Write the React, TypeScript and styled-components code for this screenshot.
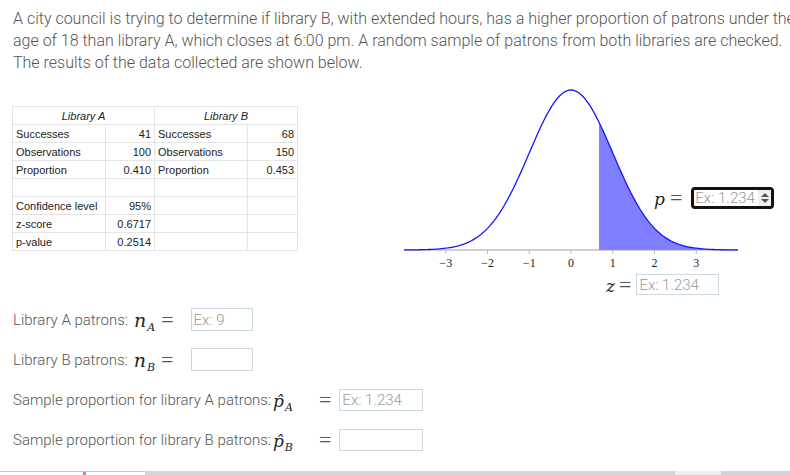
import React from "react";
import styled, { createGlobalStyle } from "styled-components";

const GlobalStyle = createGlobalStyle`
  html, body {
    margin: 0;
    padding: 0;
    overflow: hidden;
    background: #fff;
  }
  body {
    font-family: Roboto, "Liberation Sans", sans-serif;
  }
`;

const Page = styled.div`
  width: 790px;
  height: 475px;
  display: flex;
  flex-direction: column;
  position: relative;
  overflow: hidden;
`;

const Intro = styled.p`
  margin: 8px 0 0 13px;
  font-size: 16px;
  line-height: 22px;
  font-weight: 300;
  color: #555;
  white-space: nowrap;
`;

const Upper = styled.div`
  display: flex;
  margin-top: 6px;
`;

const DataTable = styled.table`
  margin: 26px 0 0 12px;
  border-collapse: collapse;
  font-family: "Liberation Sans", Arial, sans-serif;
  font-size: 11px;
  color: #222;
  table-layout: fixed;
  width: 285px;
  height: 143px;
  align-self: flex-start;
`;

const Cell = styled.td<{ $align?: "left" | "right" | "center"; $italic?: boolean }>`
  border: 1px solid #e4e4e4;
  height: 17px;
  padding: 0 3px;
  text-align: ${(p) => p.$align || "left"};
  font-style: ${(p) => (p.$italic ? "italic" : "normal")};
  white-space: nowrap;
  overflow: hidden;
`;

const ChartColumn = styled.div`
  margin-left: 98px;
  width: 395px;
  display: flex;
  flex-direction: column;
  position: relative;
`;

const Chart = styled.svg`
  display: block;
`;

const MathLabel = styled.span<{ $ml?: number; $size?: number }>`
  display: inline-flex;
  align-items: baseline;
  margin-left: ${(p) => p.$ml ?? 0}px;
  font-family: "DejaVu Serif", "Liberation Serif", serif;
  font-size: ${(p) => p.$size ?? 17}px;
  color: #222;
  white-space: nowrap;
`;

const Var = styled.i`
  font-style: italic;
`;

const Sub = styled.span`
  font-size: 11px;
  font-style: italic;
  position: relative;
  top: 4px;
  margin-left: 1px;
`;

const Eq = styled.span<{ $l: number; $r: number }>`
  font-family: "Liberation Serif", serif;
  font-size: 22px;
  line-height: 1;
  margin: 0 ${(p) => p.$r}px 0 ${(p) => p.$l}px;
  color: #555;
`;

const POverlay = styled.div`
  position: absolute;
  left: 258px;
  top: 107px;
  display: flex;
  align-items: center;
`;

const FocusBox = styled.div`
  width: 76px;
  height: 16px;
  border: 3px solid #111;
  border-radius: 4px;
  display: flex;
  align-items: center;
  justify-content: space-between;
  padding-left: 1px;
  font-size: 15px;
  font-weight: 300;
  color: #999;
  overflow: hidden;
`;

const Spinner = styled.div`
  width: 13px;
  height: 16px;
  background: #f0f0f0;
  display: flex;
  flex-direction: column;
  align-items: center;
  justify-content: center;
  gap: 2px;
`;

const Tri = styled.div<{ $up?: boolean }>`
  width: 0;
  height: 0;
  border-left: 4px solid transparent;
  border-right: 4px solid transparent;
  ${(p) => (p.$up ? "border-bottom: 4px solid #555;" : "border-top: 4px solid #555;")}
`;

const ZRow = styled.div`
  display: flex;
  align-items: center;
  padding-left: 210px;
  margin-top: 2px;
  height: 21px;
`;

const Input = styled.input<{ $w: number; $h: number }>`
  box-sizing: border-box;
  width: ${(p) => p.$w}px;
  height: ${(p) => p.$h}px;
  border: 1px solid #cbd8df;
  border-radius: 0;
  padding: 0 2px;
  font-family: Roboto, "Liberation Sans", sans-serif;
  font-size: 15px;
  font-weight: 300;
  color: #333;
  outline: none;
  &::placeholder {
    color: #9a9a9a;
  }
`;

const Questions = styled.div`
  display: flex;
  flex-direction: column;
  gap: 17px;
  margin: 13px 0 0 13px;
`;

const QRow = styled.div`
  display: flex;
  align-items: center;
  height: 23px;
  font-size: 15px;
  font-weight: 300;
  color: #555;
`;

const Scrollbar = styled.div`
  margin-top: auto;
  display: flex;
  height: 4px;
`;

const Seg = styled.div<{ $w: number; $c: string; $top?: boolean }>`
  width: ${(p) => p.$w}px;
  flex: ${(p) => (p.$w ? "none" : "1")};
  background: ${(p) => p.$c};
  border-top: ${(p) => (p.$top ? "1px solid #c8c8c8" : "none")};
  position: relative;
`;

const Marker = styled.span`
  position: absolute;
  left: 83px;
  top: 0;
  width: 3px;
  height: 3px;
  background: #e070e0;
`;

const rows: [string, string, string, string][] = [
  ["Successes", "41", "Successes", "68"],
  ["Observations", "100", "Observations", "150"],
  ["Proportion", "0.410", "Proportion", "0.453"],
  ["", "", "", ""],
  ["Confidence level", "95%", "", ""],
  ["z-score", "0.6717", "", ""],
  ["p-value", "0.2514", "", ""],
];

// normal curve geometry (svg coords)
const CX = 175;
const UNIT = 41.75;
const AXIS = 170;
const HSCALE = 401;
const zStat = 0.6717;

const pdf = (z: number) => Math.exp((-z * z) / 2) / Math.sqrt(2 * Math.PI);
const px = (z: number) => CX + z * UNIT;
const py = (z: number) => AXIS - pdf(z) * HSCALE;

function curvePath(from: number, to: number) {
  const pts: string[] = [];
  const steps = 160;
  for (let i = 0; i <= steps; i++) {
    const z = from + ((to - from) * i) / steps;
    pts.push(`${px(z).toFixed(2)},${py(z).toFixed(2)}`);
  }
  return pts;
}

function NormalChart() {
  const line = curvePath(-4, 4);
  const shade = curvePath(zStat, 4);
  const ticks = [-3, -2, -1, 0, 1, 2, 3];
  return (
    <Chart width={395} height={192} viewBox="0 0 395 192">
      <line x1={px(-4)} y1={AXIS} x2={px(4)} y2={AXIS} stroke="#cfcfcf" strokeWidth={2} />
      {ticks.map((t) => (
        <g key={t}>
          <line x1={px(t)} y1={AXIS} x2={px(t)} y2={AXIS + 4} stroke="#bbb" strokeWidth={1} />
          <text
            x={px(t)}
            y={AXIS + 17}
            textAnchor="middle"
            fontFamily="'Liberation Serif', serif"
            fontSize={12}
            fill="#222"
          >
            {t < 0 ? `\u2212${-t}` : t}
          </text>
        </g>
      ))}
      <path
        d={`M${px(zStat)},${AXIS} L${shade.join(" L")} L${px(4)},${AXIS} Z`}
        fill="#7f7fff"
      />
      <path d={`M${line.join(" L")}`} fill="none" stroke="#1414ff" strokeWidth={1.3} />
    </Chart>
  );
}

export default function App() {
  return (
    <Page>
      <GlobalStyle />
      <Intro>
        A city council is trying to determine if library B, with extended hours, has a higher proportion of patrons under the
        <br />
        age of 18 than library A, which closes at 6:00 pm. A random sample of patrons from both libraries are checked.
        <br />
        The results of the data collected are shown below.
      </Intro>
      <Upper>
        <DataTable>
          <colgroup>
            <col style={{ width: 93 }} />
            <col style={{ width: 49 }} />
            <col style={{ width: 93 }} />
            <col style={{ width: 50 }} />
          </colgroup>
          <tbody>
            <tr>
              <Cell colSpan={2} $align="center" $italic>
                Library A
              </Cell>
              <Cell colSpan={2} $align="center" $italic>
                Library B
              </Cell>
            </tr>
            {rows.map((r, i) => (
              <tr key={i}>
                <Cell>{r[0]}</Cell>
                <Cell $align="right">{r[1]}</Cell>
                <Cell>{r[2]}</Cell>
                <Cell $align="right">{r[3]}</Cell>
              </tr>
            ))}
          </tbody>
        </DataTable>
        <ChartColumn>
          <NormalChart />
          <POverlay>
            <MathLabel $ml={0}>
              <Var>p</Var>
              <Eq $l={5} $r={9}>=</Eq>
            </MathLabel>
            <FocusBox>
              Ex: 1.234
              <Spinner>
                <Tri $up />
                <Tri />
              </Spinner>
            </FocusBox>
          </POverlay>
          <ZRow>
            <MathLabel>
              <Var>z</Var>
              <Eq $l={4} $r={5}>=</Eq>
            </MathLabel>
            <Input $w={83} $h={21} placeholder="Ex: 1.234" />
          </ZRow>
        </ChartColumn>
      </Upper>
      <Questions>
        <QRow>
          Library A patrons:
          <MathLabel $ml={6} $size={19}>
            <Var>n</Var>
            <Sub>A</Sub>
            <Eq $l={6} $r={17}>=</Eq>
          </MathLabel>
          <Input $w={62} $h={23} placeholder="Ex: 9" />
        </QRow>
        <QRow>
          Library B patrons:
          <MathLabel $ml={6} $size={19}>
            <Var>n</Var>
            <Sub>B</Sub>
            <Eq $l={6} $r={17}>=</Eq>
          </MathLabel>
          <Input $w={62} $h={23} />
        </QRow>
        <QRow>
          Sample proportion for library A patrons:
          <MathLabel $ml={2}>
            <Var>p&#770;</Var>
            <Sub>A</Sub>
            <Eq $l={26} $r={8}>=</Eq>
          </MathLabel>
          <Input $w={84} $h={22} placeholder="Ex: 1.234" />
        </QRow>
        <QRow>
          Sample proportion for library B patrons:
          <MathLabel $ml={2}>
            <Var>p&#770;</Var>
            <Sub>B</Sub>
            <Eq $l={26} $r={8}>=</Eq>
          </MathLabel>
          <Input $w={84} $h={22} />
        </QRow>
      </Questions>
      <Scrollbar>
        <Seg $w={145} $c="#fff" $top>
          <Marker />
        </Seg>
        <Seg $w={530} $c="#d5d5d5" />
        <Seg $w={46} $c="#eeeeee" />
        <Seg $w={0} $c="#d2d2da" />
      </Scrollbar>
    </Page>
  );
}
